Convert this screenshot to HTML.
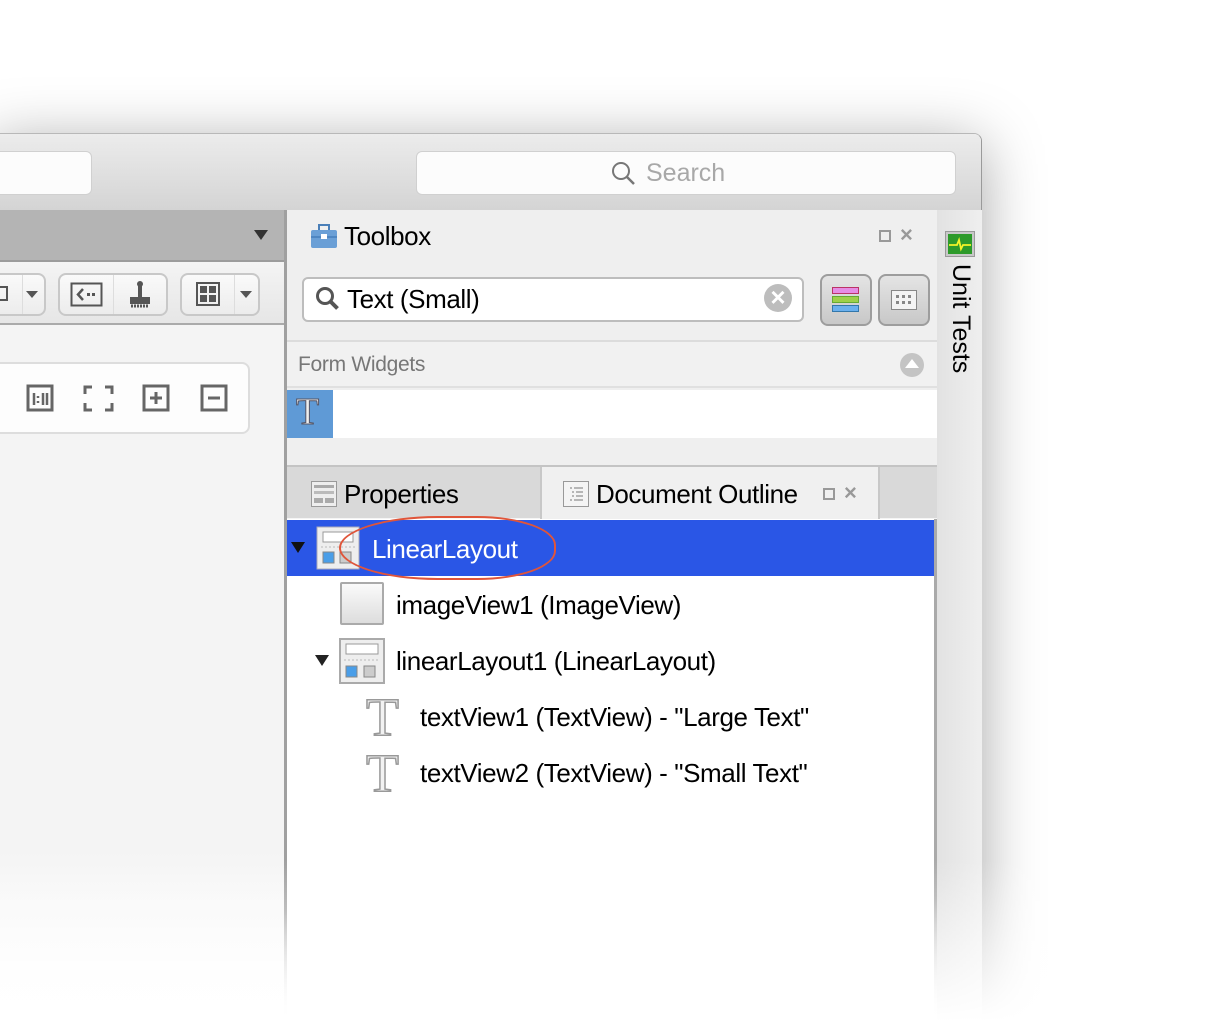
<!DOCTYPE html>
<html><head><meta charset="utf-8"><style>
*{margin:0;padding:0;box-sizing:border-box}
html{width:1224px;height:1022px;overflow:hidden}
body{width:1224px;height:1022px;position:relative;overflow:hidden;background:#fff;font-family:"Liberation Sans",sans-serif;color:#000}
.a{position:absolute}
.win{left:-10px;top:133px;width:992px;height:889px;border-radius:0 8px 0 0;box-shadow:0 10px 60px rgba(0,0,0,0.35);background:#f4f4f4;overflow:hidden;border-right:1px solid #9a9a9a;border-top:1px solid #b8b8b8}
.tb{position:absolute;left:0;top:0;width:100%;height:77px;background:linear-gradient(#ececec,#d4d4d4);border-bottom:1px solid #a8a8a8}
.fld{position:absolute;background:#fcfcfc;border-radius:6px;border:1px solid #d0d0d0}
.btn{position:absolute;background:linear-gradient(#fafafa,#ececec);border:2px solid #c8c8c8;border-radius:8px}
.tree{font-size:26px;letter-spacing:-0.4px}
</style></head><body>
<div class="a win">
 <div class="tb">
  <div class="fld" style="left:0;top:17px;width:102px;height:44px"></div>
  <div class="fld" style="left:426px;top:17px;width:540px;height:44px"></div>
 </div>
</div>
<svg class="a" style="left:610px;top:160px" width="26" height="26" viewBox="0 0 26 26"><circle cx="11" cy="11" r="8" fill="none" stroke="#777" stroke-width="2"/><path d="M17 17l7 7" stroke="#777" stroke-width="2.5"/></svg>
<div class="a" style="left:646px;top:159px;font-size:25px;color:#a8a8a8">Search</div>

<div class="a" style="left:0;top:210px;width:285px;height:52px;background:#b4b4b4;border-bottom:2px solid #9c9c9c"></div>
<div class="a" style="left:254px;top:230px;width:0;height:0;border-left:7px solid transparent;border-right:7px solid transparent;border-top:10px solid #333"></div>
<div class="a" style="left:0;top:262px;width:285px;height:63px;background:linear-gradient(#f4f4f4,#e6e6e6);border-bottom:2px solid #aaa"></div>
<div class="a" style="left:0;top:325px;width:285px;height:697px;background:linear-gradient(#f4f4f4 520px,#fff 697px)"></div>
<div class="btn" style="left:-10px;top:273px;width:56px;height:43px;border-radius:8px"></div>
<div class="a" style="left:0;top:286px;width:8px;height:15px;border:2px solid #555;border-left:none"></div>
<div class="a" style="left:22px;top:275px;width:1px;height:39px;background:#ddd"></div>
<div class="a" style="left:26px;top:291px;border-left:6px solid transparent;border-right:6px solid transparent;border-top:7px solid #555"></div>
<div class="btn" style="left:58px;top:273px;width:110px;height:43px"></div>
<div class="a" style="left:113px;top:275px;width:1px;height:39px;background:#ddd"></div>
<svg class="a" style="left:70px;top:282px" width="34" height="26"><rect x="1.5" y="1.5" width="30" height="22" fill="none" stroke="#555" stroke-width="2"/><path d="M13 7l-5 5.5 5 5.5" fill="none" stroke="#555" stroke-width="2.5"/><rect x="17" y="11" width="3" height="3" fill="#555"/><rect x="22" y="11" width="3" height="3" fill="#555"/></svg>
<svg class="a" style="left:128px;top:280px" width="24" height="30"><circle cx="12" cy="4" r="3" fill="#555"/><rect x="10" y="4" width="4" height="14" fill="#555"/><rect x="2" y="17" width="20" height="7" fill="#555"/><path d="M3 26h18" stroke="#555" stroke-width="3" stroke-dasharray="2 1"/></svg>
<div class="btn" style="left:180px;top:273px;width:80px;height:43px"></div>
<div class="a" style="left:234px;top:275px;width:1px;height:39px;background:#ddd"></div>
<svg class="a" style="left:196px;top:282px" width="24" height="24"><rect x="1" y="1" width="22" height="22" fill="none" stroke="#555" stroke-width="2"/><rect x="4" y="4" width="7" height="7" fill="#555"/><rect x="13" y="4" width="7" height="7" fill="#555"/><rect x="4" y="13" width="7" height="7" fill="#555"/><rect x="13" y="13" width="7" height="7" fill="#555"/></svg>
<div class="a" style="left:240px;top:291px;border-left:6px solid transparent;border-right:6px solid transparent;border-top:7px solid #555"></div>
<div class="a" style="left:-10px;top:362px;width:260px;height:72px;background:#fdfdfd;border:2px solid #ddd;border-radius:8px"></div>
<svg class="a" style="left:25px;top:384px" width="205" height="30">
 <rect x="3" y="2" width="24" height="24" fill="none" stroke="#666" stroke-width="3"/><path d="M9 9v12M13 12v2M13 17v2M18 9v12M22 9v12" stroke="#666" stroke-width="2.5"/>
 <path d="M60 10V3h7M80 3h7v7M87 19v7h-7M67 26h-7v-7" fill="none" stroke="#666" stroke-width="3"/>
 <rect x="119" y="2" width="24" height="24" fill="none" stroke="#666" stroke-width="3"/><path d="M131 8v12M125 14h12" stroke="#666" stroke-width="3"/>
 <rect x="177" y="2" width="24" height="24" fill="none" stroke="#666" stroke-width="3"/><path d="M183 14h12" stroke="#666" stroke-width="3"/>
</svg>

<div class="a" style="left:284px;top:210px;width:3px;height:812px;background:linear-gradient(#a0a0a0 700px,#fff)"></div>

<div class="a" style="left:287px;top:210px;width:650px;height:256px;background:#efefef"></div>
<svg class="a" style="left:310px;top:224px" width="28" height="25"><rect x="9" y="1" width="10" height="6" fill="none" stroke="#4a7fb8" stroke-width="2"/><rect x="1" y="6" width="26" height="18" rx="2" fill="#6a9fd6"/><rect x="1" y="12" width="26" height="2" fill="#4e86c2"/><rect x="11" y="10" width="6" height="5" fill="#fff"/></svg>
<div class="a" style="left:344px;top:221px;font-size:26px;letter-spacing:-0.4px">Toolbox</div>
<div class="a" style="left:879px;top:230px;width:12px;height:12px;border:2px solid #999"></div>
<div class="a" style="left:900px;top:222px;font-size:22px;color:#999;font-weight:bold">×</div>
<div class="a" style="left:302px;top:277px;width:502px;height:45px;background:#fff;border:2px solid #bdbdbd;border-radius:6px"></div>
<svg class="a" style="left:314px;top:285px" width="28" height="28"><circle cx="11" cy="11" r="7.5" fill="none" stroke="#555" stroke-width="3"/><path d="M16.5 16.5l7 7" stroke="#555" stroke-width="4"/></svg>
<div class="a" style="left:347px;top:284px;font-size:26px;letter-spacing:-0.4px">Text (Small)</div>
<div class="a" style="left:764px;top:284px;width:28px;height:28px;border-radius:50%;background:#bdbdbd;color:#fff;font-size:26px;line-height:27px;text-align:center;font-weight:bold">×</div>
<div class="btn" style="left:820px;top:274px;width:52px;height:52px;background:linear-gradient(#e4e4e4,#c8c8c8);border:2px solid #9d9d9d"></div>
<div class="a" style="left:832px;top:287px;width:27px;height:7px;background:#e58ce5;border:1px solid #b36"></div>
<div class="a" style="left:832px;top:296px;width:27px;height:7px;background:#9ed04a;border:1px solid #6a3"></div>
<div class="a" style="left:832px;top:305px;width:27px;height:7px;background:#6ab0ee;border:1px solid #37a"></div>
<div class="btn" style="left:878px;top:274px;width:52px;height:52px;background:linear-gradient(#e4e4e4,#c8c8c8);border:2px solid #9d9d9d"></div>
<svg class="a" style="left:891px;top:290px" width="26" height="20"><rect x="0.5" y="0.5" width="25" height="19" fill="#f4f4f4" stroke="#888"/><g fill="#888"><rect x="5" y="5" width="3" height="3"/><rect x="11" y="5" width="3" height="3"/><rect x="17" y="5" width="3" height="3"/><rect x="5" y="11" width="3" height="3"/><rect x="11" y="11" width="3" height="3"/><rect x="17" y="11" width="3" height="3"/></g></svg>
<div class="a" style="left:287px;top:340px;width:650px;height:2px;background:#dcdcdc"></div>
<div class="a" style="left:287px;top:342px;width:650px;height:46px;background:#f1f1f1;border-bottom:2px solid #e0e0e0"></div>
<div class="a" style="left:298px;top:353px;font-size:21px;color:#777;letter-spacing:-0.3px">Form Widgets</div>
<div class="a" style="left:900px;top:353px;width:24px;height:24px;border-radius:50%;background:#c4c4c4"></div>
<div class="a" style="left:905px;top:359px;border-left:7px solid transparent;border-right:7px solid transparent;border-bottom:9px solid #fff"></div>
<div class="a" style="left:287px;top:390px;width:650px;height:48px;background:#fff"></div>
<div class="a" style="left:287px;top:390px;width:46px;height:48px;background:#5f9ad6"></div>
<div class="a" style="left:296px;top:390px;font-family:'Liberation Serif',serif;font-size:38px;color:#eee;-webkit-text-stroke:1px #556">T</div>

<div class="a" style="left:287px;top:465px;width:650px;height:2px;background:#c4c4c4"></div>
<div class="a" style="left:287px;top:467px;width:650px;height:51px;background:#d9d9d9"></div>
<div class="a" style="left:540px;top:467px;width:340px;height:53px;background:#f0f0f0;border-left:2px solid #c8c8c8;border-right:2px solid #c8c8c8"></div>
<svg class="a" style="left:311px;top:481px" width="26" height="26"><rect x="0.5" y="0.5" width="25" height="25" fill="#eee" stroke="#999"/><rect x="3" y="4" width="20" height="3" fill="#aaa"/><rect x="3" y="10" width="20" height="3" fill="#bbb"/><rect x="3" y="17" width="9" height="5" fill="#aaa"/><rect x="14" y="17" width="9" height="5" fill="#aaa"/></svg>
<div class="a" style="left:344px;top:479px;font-size:26px;letter-spacing:-0.4px">Properties</div>
<svg class="a" style="left:563px;top:481px" width="26" height="26"><rect x="0.5" y="0.5" width="25" height="25" fill="#f4f4f4" stroke="#999"/><path d="M7 7h2M11 7h9M9 11h2M13 11h7M9 15h2M13 15h7M7 19h2M11 19h9" stroke="#777"/></svg>
<div class="a" style="left:596px;top:479px;font-size:26px;letter-spacing:-0.4px">Document Outline</div>
<div class="a" style="left:823px;top:488px;width:12px;height:12px;border:2px solid #999"></div>
<div class="a" style="left:844px;top:480px;font-size:22px;color:#999;font-weight:bold">×</div>

<div class="a" style="left:287px;top:519px;width:650px;height:503px;background:#fff"></div>
<div class="a" style="left:934px;top:519px;width:3px;height:503px;background:linear-gradient(#aaa 380px,#fff)"></div>
<div class="a" style="left:287px;top:520px;width:647px;height:56px;background:#2a56e6"></div>
<div class="a" style="left:291px;top:542px;border-left:7px solid transparent;border-right:7px solid transparent;border-top:11px solid #111"></div>
<svg class="a" style="left:316px;top:526px" width="44" height="44"><rect x="1" y="1" width="42" height="42" fill="#eee" stroke="#aab"/><rect x="7" y="6" width="30" height="10" fill="#fff" stroke="#999"/><path d="M5 21h34" stroke="#bbb" stroke-dasharray="2 2"/><rect x="7" y="26" width="11" height="11" fill="#4a9ee8" stroke="#888"/><rect x="24" y="26" width="11" height="11" fill="#ccc" stroke="#888"/></svg>
<div class="a tree" style="left:372px;top:534px;color:#fff">LinearLayout</div>
<div class="a" style="left:339px;top:516px;width:217px;height:64px;border:2.5px solid #e0553a;border-radius:50% 40% 40% 50%/55% 50% 50% 55%"></div>
<div class="a" style="left:340px;top:582px;width:44px;height:43px;background:linear-gradient(#fafafa,#ddd);border:2px solid #aaa;border-radius:2px"></div>
<div class="a tree" style="left:396px;top:590px">imageView1 (ImageView)</div>
<div class="a" style="left:315px;top:655px;border-left:7px solid transparent;border-right:7px solid transparent;border-top:11px solid #222"></div>
<svg class="a" style="left:339px;top:638px" width="46" height="46"><rect x="1" y="1" width="44" height="44" fill="#eee" stroke="#aaa" stroke-width="2"/><rect x="7" y="6" width="32" height="10" fill="#fff" stroke="#999"/><path d="M5 22h36" stroke="#bbb" stroke-dasharray="2 2"/><rect x="7" y="28" width="11" height="11" fill="#4a9ee8" stroke="#888"/><rect x="25" y="28" width="11" height="11" fill="#ccc" stroke="#888"/></svg>
<div class="a tree" style="left:396px;top:646px">linearLayout1 (LinearLayout)</div>
<div class="a" style="left:366px;top:686px;font-family:'Liberation Serif',serif;font-size:54px;color:#f2f2f2;-webkit-text-stroke:1.5px #999">T</div>
<div class="a tree" style="left:420px;top:702px">textView1 (TextView) - "Large Text"</div>
<div class="a" style="left:366px;top:742px;font-family:'Liberation Serif',serif;font-size:54px;color:#f2f2f2;-webkit-text-stroke:1.5px #999">T</div>
<div class="a tree" style="left:420px;top:758px">textView2 (TextView) - "Small Text"</div>

<div class="a" style="left:937px;top:210px;width:45px;height:812px;background:linear-gradient(90deg,#e2e2e2,#efefef)"></div>
<svg class="a" style="left:945px;top:231px" width="30" height="26"><rect x="0.5" y="0.5" width="29" height="25" fill="#c8c8c8" stroke="#999"/><rect x="3" y="3" width="24" height="20" fill="#2d9a2a"/><path d="M4 14h8l2-5 2 9 2-4h8" fill="none" stroke="#f4f428" stroke-width="1.8"/></svg>
<div class="a" style="left:946px;top:264px;font-size:25px;writing-mode:vertical-rl">Unit Tests</div>

<div class="a" style="left:0;top:860px;width:1224px;height:162px;background:linear-gradient(rgba(255,255,255,0),rgba(255,255,255,0.6) 60%,#fff)"></div>
</body></html>
